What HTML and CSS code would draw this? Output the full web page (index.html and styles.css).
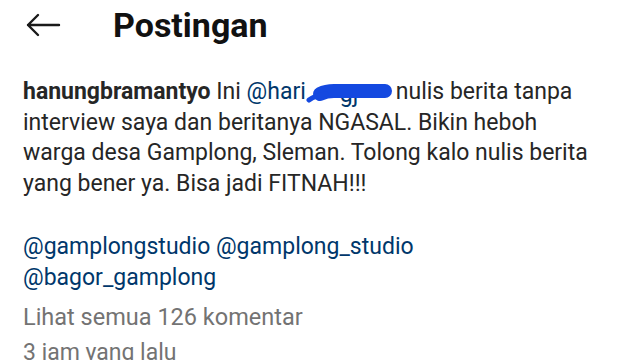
FILE: index.html
```html
<!DOCTYPE html>
<html lang="id">
<head>
<meta charset="utf-8">
<link rel="stylesheet" href="styles.css">
</head>
<body>
<header class="topbar">
  <svg class="back" width="36" height="24" viewBox="0 0 36 24" aria-hidden="true">
    <path d="M34 12H3M13 2L3 12l10 10" fill="none" stroke="#1a1a1a" stroke-width="2.4" stroke-linecap="round" stroke-linejoin="round"/>
  </svg>
  <h1 class="title">Postingan</h1>
</header>
<main class="post">
  <p class="caption"><b class="user">hanungbramantyo</b> Ini <span class="mention">@hari</span><span class="redact"><span class="hidden-txt">gj</span><svg class="scribble" width="90" height="26" viewBox="0 0 90 26" aria-hidden="true"><path d="M14 13C18 11 22 10 28 10L79 10" fill="none" stroke="#1449e0" stroke-width="14" stroke-linecap="round" stroke-linejoin="round"/><path d="M3 19C7 16 12 14 20 13" fill="none" stroke="#1449e0" stroke-width="5" stroke-linecap="round"/></svg></span>nulis berita tanpa interview saya dan beritanya NGASAL. Bikin heboh warga desa Gamplong, Sleman. Tolong kalo nulis berita yang bener ya. Bisa jadi FITNAH!!!</p>
  <p class="tags"><span class="mention">@gamplongstudio</span> <span class="mention">@gamplong_studio</span> <span class="mention">@bagor_gamplong</span></p>
  <p class="comments">Lihat semua 126 komentar</p>
  <p class="time">3 jam yang lalu</p>
</main>
</body>
</html>
```
FILE: styles.css
```css
* { box-sizing: border-box; }
html, body { margin: 0; padding: 0; background: #fff; }
body {
  width: 640px; height: 360px; overflow: hidden;
  font-family: Roboto, "Noto Sans", sans-serif;
  color: #262626;
}
.topbar {
  display: flex; align-items: center;
  height: 50px; padding-left: 25px;
}
.back { display: block; }
.title {
  margin: 0 0 0 52px;
  font-size: 34px; font-weight: 700; color: #111;
  line-height: 50px;
}
.post { width: 600px; padding: 27px 0 0 23px; }
.post p { margin: 0; font-size: 23px; line-height: 30.7px; }
.user { font-weight: 700; }
.mention { color: #00376b; }
.redact {
  display: inline-block; position: relative;
  width: 90px; height: 20px; vertical-align: -3px;
  padding-left: 34px; line-height: 20px;
}
.hidden-txt { color: #00376b; }
.scribble { position: absolute; left: 0; top: -4px; }
.tags { margin-top: 32px !important; width: 560px; }
.comments { color: #737373; margin-top: 9px !important; font-size: 23.5px !important; }
.time { color: #737373; margin-top: 5px !important; font-size: 23px !important; }
```
